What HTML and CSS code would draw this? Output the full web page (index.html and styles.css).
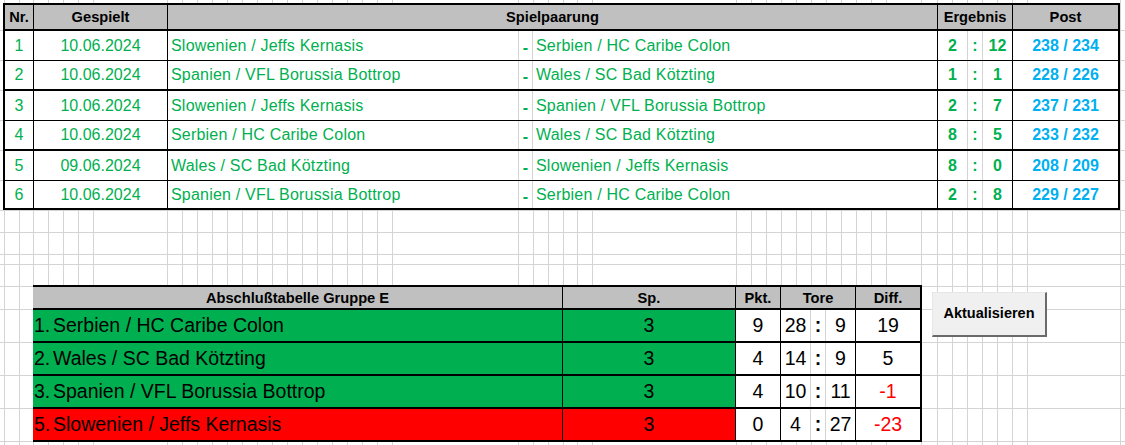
FILE: index.html
```html
<!DOCTYPE html>
<html lang="de">
<head>
<meta charset="utf-8">
<title>Gruppe E</title>
<link rel="stylesheet" href="styles.css">
</head>
<body>
<div class="sheet">
  <svg class="gridlines" width="1125" height="445" viewBox="0 0 1125 445" aria-hidden="true">
    <path d="M4.5 0V445M19.5 0V445M33.5 0V445M48.5 0V445M63.5 0V445M78.5 0V445M93.5 0V445M167.5 0V445M182.5 0V445M197.5 0V445M212.5 0V445M227.5 0V445M242.5 0V445M257.5 0V445M272.5 0V445M287.5 0V445M302.5 0V445M317.5 0V445M332.5 0V445M347.5 0V445M362.5 0V445M377.5 0V445M392.5 0V445M518.5 0V445M533.5 0V445M548.5 0V445M563.5 0V445M577.5 0V445M592.5 0V445M736.5 0V445M751.5 0V445M766.5 0V445M781.5 0V445M796.5 0V445M811.5 0V445M826.5 0V445M841.5 0V445M856.5 0V445M871.5 0V445M886.5 0V445M921.5 0V445M937.5 0V445M952.5 0V445M967.5 0V445M982.5 0V445M997.5 0V445M1012.5 0V445M1027.5 0V445M1120.5 0V445M0 30.5H1125M0 60.5H1125M0 90.5H1125M0 120.5H1125M0 150.5H1125M0 180.5H1125M0 210.5H1125M0 232.5H1125M0 254.5H1125M0 264.5H1125M0 286.5H1125M0 309.5H1125M0 342.5H1125M0 375.5H1125M0 408.5H1125M0 441.5H1125" stroke="#d4d4d4" stroke-width="1" fill="none" shape-rendering="crispEdges"/>
  </svg>

  <div class="games">
    <div class="row head">
      <div class="c">Nr.</div>
      <div class="c">Gespielt</div>
      <div class="c span3">Spielpaarung</div>
      <div class="c span3">Ergebnis</div>
      <div class="c end">Post</div>
    </div>

    <div class="row">
      <div class="c">1</div>
      <div class="c">10.06.2024</div>
      <div class="c g left">Slowenien / Jeffs Kernasis</div>
      <div class="c g dash">-</div>
      <div class="c left">Serbien / HC Caribe Colon</div>
      <div class="c g score">2</div>
      <div class="c g score">:</div>
      <div class="c score">12</div>
      <div class="c end post">238 / 234</div>
    </div>

    <div class="row thick">
      <div class="c">2</div>
      <div class="c">10.06.2024</div>
      <div class="c g left">Spanien / VFL Borussia Bottrop</div>
      <div class="c g dash">-</div>
      <div class="c left">Wales / SC Bad Kötzting</div>
      <div class="c g score">1</div>
      <div class="c g score">:</div>
      <div class="c score">1</div>
      <div class="c end post">228 / 226</div>
    </div>

    <div class="row">
      <div class="c">3</div>
      <div class="c">10.06.2024</div>
      <div class="c g left">Slowenien / Jeffs Kernasis</div>
      <div class="c g dash">-</div>
      <div class="c left">Spanien / VFL Borussia Bottrop</div>
      <div class="c g score">2</div>
      <div class="c g score">:</div>
      <div class="c score">7</div>
      <div class="c end post">237 / 231</div>
    </div>

    <div class="row thick">
      <div class="c">4</div>
      <div class="c">10.06.2024</div>
      <div class="c g left">Serbien / HC Caribe Colon</div>
      <div class="c g dash">-</div>
      <div class="c left">Wales / SC Bad Kötzting</div>
      <div class="c g score">8</div>
      <div class="c g score">:</div>
      <div class="c score">5</div>
      <div class="c end post">233 / 232</div>
    </div>

    <div class="row">
      <div class="c">5</div>
      <div class="c">09.06.2024</div>
      <div class="c g left">Wales / SC Bad Kötzting</div>
      <div class="c g dash">-</div>
      <div class="c left">Slowenien / Jeffs Kernasis</div>
      <div class="c g score">8</div>
      <div class="c g score">:</div>
      <div class="c score">0</div>
      <div class="c end post">208 / 209</div>
    </div>

    <div class="row thick last">
      <div class="c">6</div>
      <div class="c">10.06.2024</div>
      <div class="c g left">Spanien / VFL Borussia Bottrop</div>
      <div class="c g dash">-</div>
      <div class="c left">Serbien / HC Caribe Colon</div>
      <div class="c g score">2</div>
      <div class="c g score">:</div>
      <div class="c score">8</div>
      <div class="c end post">229 / 227</div>
    </div>
  </div>

  <div class="lower">
    <div class="standings">
      <div class="srow shead">
        <div class="c">Abschlußtabelle Gruppe E</div>
        <div class="c">Sp.</div>
        <div class="c">Pkt.</div>
        <div class="c span3">Tore</div>
        <div class="c end">Diff.</div>
      </div>

      <div class="srow">
        <div class="c left team up"><span class="pos">1.</span>Serbien / HC Caribe Colon</div>
        <div class="c up">3</div>
        <div class="c">9</div>
        <div class="c g">28</div>
        <div class="c g colon">:</div>
        <div class="c">9</div>
        <div class="c end">19</div>
      </div>

      <div class="srow">
        <div class="c left team up"><span class="pos">2.</span>Wales / SC Bad Kötzting</div>
        <div class="c up">3</div>
        <div class="c">4</div>
        <div class="c g">14</div>
        <div class="c g colon">:</div>
        <div class="c">9</div>
        <div class="c end">5</div>
      </div>

      <div class="srow">
        <div class="c left team up"><span class="pos">3.</span>Spanien / VFL Borussia Bottrop</div>
        <div class="c up">3</div>
        <div class="c">4</div>
        <div class="c g">10</div>
        <div class="c g colon">:</div>
        <div class="c">11</div>
        <div class="c end neg">-1</div>
      </div>

      <div class="srow">
        <div class="c left team down"><span class="pos">5.</span>Slowenien / Jeffs Kernasis</div>
        <div class="c down">3</div>
        <div class="c">0</div>
        <div class="c g">4</div>
        <div class="c g colon">:</div>
        <div class="c">27</div>
        <div class="c end neg">-23</div>
      </div>
    </div>

    <button class="refresh" type="button">Aktualisieren</button>
  </div>
</div>
</body>
</html>
```

FILE: styles.css
```css
* {
  box-sizing: border-box;
  margin: 0;
  padding: 0;
}

body {
  margin: 0;
  background: #ffffff;
  font-family: "Liberation Sans", Arial, sans-serif;
  color: #000000;
}

.sheet {
  position: relative;
  width: 1125px;
  height: 445px;
  overflow: hidden;
  padding-top: 3px;
}

.gridlines {
  position: absolute;
  left: 0;
  top: 0;
}

/* ---------- games table ---------- */
.games {
  position: relative;
  margin-left: 3px;
  width: 1117px;
  border: 2px solid #000000;
  border-bottom: 0;
  background: #ffffff;
}

.row {
  display: grid;
  grid-template-columns: 29px 134px 351px 14px 405px 30px 15px 30px 105px;
  height: 30px;
  border-bottom: 1px solid #000000;
  font-size: 16px;
  color: #00b050;
}

.row.thick {
  border-bottom-width: 2px;
}

.row.last {
  height: 29px;
}

.row.head {
  height: 26px;
  border-bottom-width: 2px;
  background: #c0c0c0;
  color: #000000;
  font-weight: bold;
  font-size: 14.67px;
}

.c {
  display: flex;
  align-items: center;
  justify-content: center;
  border-right: 1px solid #000000;
  white-space: nowrap;
  overflow: hidden;
}

.c.g {
  border-right-color: #d4d4d4;
}

.c.end {
  border-right: 0;
}

.c.left {
  justify-content: flex-start;
  padding-left: 3px;
}

.row .c.left {
  letter-spacing: 0.2px;
}

.span3 {
  grid-column: span 3;
}

.dash {
  font-weight: bold;
  padding-top: 4px;
}

.score {
  font-weight: bold;
}

.post {
  font-weight: bold;
  color: #00b0f0;
}

/* ---------- standings ---------- */
.lower {
  position: relative;
  display: flex;
  align-items: flex-start;
  margin-top: 75px;
  padding-left: 33px;
}

.standings {
  width: 889px;
  border-top: 2px solid #000000;
  border-right: 2px solid #000000;
  background: #ffffff;
}

.srow {
  display: grid;
  grid-template-columns: 530px 173px 45px 30px 15px 30px 64px;
  height: 33px;
  border-bottom: 2px solid #000000;
  font-size: 19.5px;
}

.srow.shead {
  height: 23px;
  background: #c0c0c0;
  font-weight: bold;
  font-size: 14.67px;
}

.team.left {
  padding-left: 1px;
}

.pos {
  display: inline-block;
  width: 19px;
}

.up {
  background: #00b050;
}

.down {
  background: #ff0000;
}

.colon {
  font-weight: bold;
}

.neg {
  color: #ff0000;
}

.refresh {
  margin-left: 10px;
  margin-top: 7px;
  width: 115px;
  height: 45px;
  background: #f0f0f0;
  border-style: solid;
  border-width: 1px 2px 2px 1px;
  border-color: #e6e6e6 #6a6a6a #6a6a6a #e6e6e6;
  font-family: "Liberation Sans", Arial, sans-serif;
  font-weight: bold;
  font-size: 14.5px;
  color: #000000;
  padding: 0 0 2px 0;
}
```
